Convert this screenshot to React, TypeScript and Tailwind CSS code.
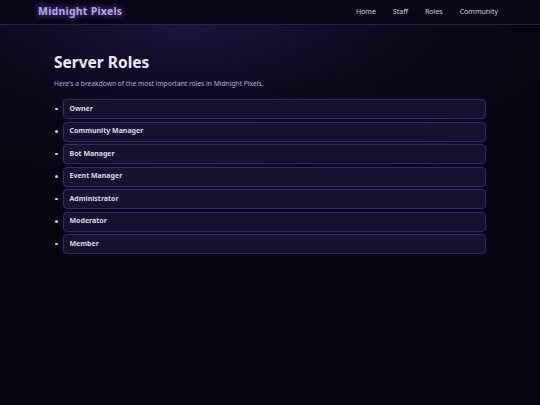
import React from "react";

const roles = [
  "Owner",
  "Community Manager",
  "Bot Manager",
  "Event Manager",
  "Administrator",
  "Moderator",
  "Member",
];

const links = ["Home", "Staff", "Roles", "Community"];

export default function App() {
  return (
    <div
      className="min-h-[405px] bg-[#04040e] text-[#e6e1f5]"
      style={{
        fontFamily: '"Noto Sans", "Open Sans", sans-serif',
        backgroundImage:
          "radial-gradient(ellipse 80% 50% at 35% 0%, rgba(62,42,118,0.5), rgba(20,14,45,0.35) 55%, transparent 100%)",
      }}
    >
      <header className="flex h-[25px] items-center justify-between border-b border-[#2a2150] bg-[#080616] px-[38px]">
        <div className="text-[10.5px] font-bold tracking-[0.25px] text-[#b9a2f0] [text-shadow:0_0_6px_rgba(160,120,255,0.8)]">
          Midnight Pixels
        </div>
        <nav className="flex items-center gap-[17px] pr-[4px] text-[7px] text-[#cfcbe0]">
          {links.map((l) => (
            <span key={l}>{l}</span>
          ))}
        </nav>
      </header>

      <main className="mx-auto w-[80%] pt-[26px]">
        <h1 className="text-[15.5px] leading-[22px] font-bold text-[#ece8f8]">Server Roles</h1>
        <p className="mt-[6px] text-[6.7px] text-[#b5a8e6]">
          Here's a breakdown of the most important roles in Midnight Pixels.
        </p>
        <ul className="mt-[10px] flex flex-col gap-[2.5px] pl-[1px]">
          {roles.map((r) => (
            <li key={r} className="flex items-center">
              <span className="mr-[5px] h-[2.5px] w-[2.5px] rounded-full bg-[#d8d4ea]" />
              <div className="flex h-[20px] flex-1 items-center rounded-[4px] border border-[#352a68] bg-[#17122e] px-[6px] text-[7px] font-bold text-[#dcd8ec] shadow-[0_0_4px_rgba(90,60,180,0.25)]">
                {r}
              </div>
            </li>
          ))}
        </ul>
      </main>
    </div>
  );
}
